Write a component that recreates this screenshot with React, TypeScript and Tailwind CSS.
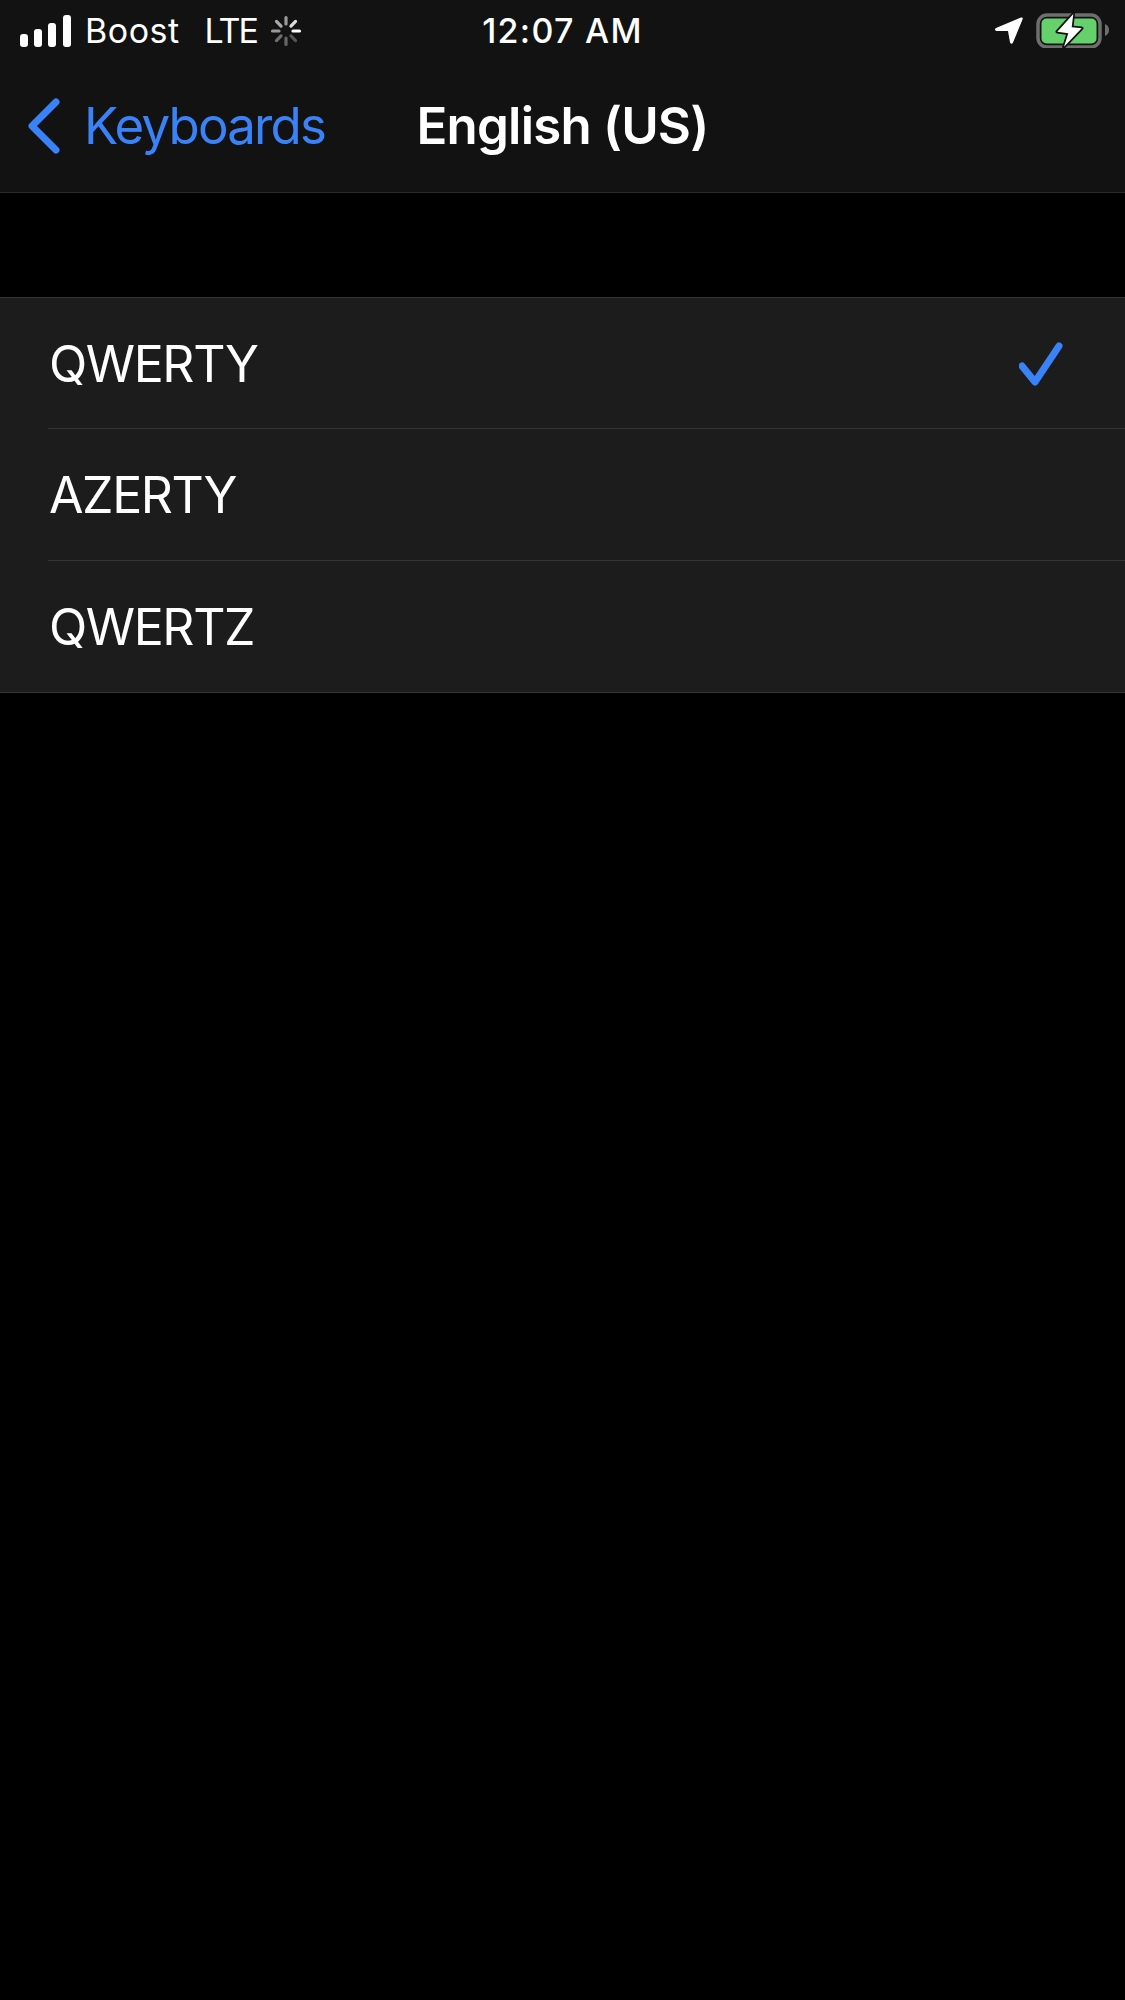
const FONT = "font-['Inter',sans-serif]";

function SignalBars() {
  return (
    <svg width="52" height="33" viewBox="0 0 52 33" className="shrink-0">
      <rect x="0" y="19" width="8" height="13" rx="3" fill="#fff" />
      <rect x="14" y="14" width="8" height="18" rx="3" fill="#fff" />
      <rect x="28" y="8" width="8" height="24" rx="3" fill="#fff" />
      <rect x="43" y="0" width="8" height="32" rx="3" fill="#fff" />
    </svg>
  );
}

function Spinner() {
  const shades = ["#999999", "#dddddd", "#ffffff", "#555555", "#666666", "#6f6f6f", "#999999", "#aaaaaa"];
  return (
    <svg width="32" height="32" viewBox="0 0 32 32" className="shrink-0">
      {shades.map((color, i) => (
        <line
          key={i}
          x1="16"
          y1="2.5"
          x2="16"
          y2="9"
          stroke={color}
          strokeWidth="3.2"
          strokeLinecap="round"
          transform={`rotate(${i * 45} 16 16)`}
        />
      ))}
    </svg>
  );
}

function LocationArrow() {
  return (
    <svg width="32" height="32" viewBox="0 0 32 32" className="shrink-0">
      <path
        d="M3 13 L28 2.5 Q30.5 2 29.5 4.5 L20 27.5 Q18.5 30 17 27.5 L15 16 L3.5 16 Q0.5 15 3 13 Z"
        fill="#fff"
      />
    </svg>
  );
}

function Battery() {
  return (
    <svg width="74" height="36" viewBox="0 0 74 36" className="mb-[2px] shrink-0">
      <rect x="2" y="3" width="62" height="32" rx="9" fill="none" stroke="#6e6e6e" strokeWidth="3.5" />
      <rect x="5.5" y="6.5" width="55" height="25" rx="5" fill="#65d16c" />
      <path d="M69 12 Q73 13.5 73 18 Q73 22.5 69 24 Z" fill="#6e6e6e" />
      <path
        d="M37.3 2 L21.3 19.7 L32.3 21.3 L28 34.7 L45.7 16.3 L35.7 15.3 Z"
        fill="#fff"
        stroke="#121212"
        strokeWidth="3.5"
        strokeLinejoin="round"
        paintOrder="stroke"
      />
    </svg>
  );
}

function StatusBar() {
  return (
    <div className="grid h-[62px] grid-cols-[1fr_auto_1fr] items-center text-white">
      <div className="flex items-center pl-[20px]">
        <SignalBars />
        <span className="ml-[13px] text-[34px] leading-none tracking-[0.5px]">Boost</span>
        <span className="ml-[25px] text-[34px] leading-none tracking-[-2px]">LTE</span>
        <span className="ml-[13px] flex">
          <Spinner />
        </span>
      </div>
      <span className="text-[34px] font-medium leading-none tracking-[1.3px]">12:07 AM</span>
      <div className="flex items-center justify-end gap-[11px] pr-[15px]">
        <LocationArrow />
        <Battery />
      </div>
    </div>
  );
}

function NavBar() {
  return (
    <div className="grid h-[131px] grid-cols-[1fr_auto_1fr] items-center border-b border-[#2a2a2a] pb-[3px]">
      <div className="flex items-center gap-[23px] pl-[27px] text-[#3a82f7]">
        <svg width="34" height="58" viewBox="0 0 34 58" className="shrink-0">
          <path d="M29 5 L5 29 L29 53" fill="none" stroke="#3a82f7" strokeWidth="7" strokeLinecap="round" strokeLinejoin="round" />
        </svg>
        <span className="text-[51px] leading-none tracking-[-1.8px]">Keyboards</span>
      </div>
      <span className="text-[51px] font-semibold leading-none tracking-[-0.8px] text-white">English (US)</span>
      <div />
    </div>
  );
}

function OptionRow({ label, selected, last, height }: { label: string; selected?: boolean; last?: boolean; height: string }) {
  return (
    <div className="pl-[48px]">
      <div className={`flex items-center justify-between pr-[58px] ${height} ${last ? "" : "border-b border-[#343434]"}`}>
        <span className="pl-[1px] pt-[1px] text-[50px] leading-none tracking-[-1.4px] text-white">{label}</span>
        {selected && (
          <svg width="48" height="48" viewBox="0 0 48 48" className="shrink-0">
            <path d="M3 27 L16 43 L40 7" fill="none" stroke="#3a82f7" strokeWidth="7" strokeLinecap="round" strokeLinejoin="round" />
          </svg>
        )}
      </div>
    </div>
  );
}

export default function App() {
  return (
    <div className={`h-[2000px] w-[1125px] overflow-hidden bg-black ${FONT}`}>
      <div className="bg-[#121212]">
        <StatusBar />
        <NavBar />
      </div>
      <div className="mt-[104px] border-y border-[#343434] bg-[#1c1c1c]">
        <OptionRow label="QWERTY" selected height="h-[131px]" />
        <OptionRow label="AZERTY" height="h-[132px]" />
        <OptionRow label="QWERTZ" last height="h-[131px]" />
      </div>
    </div>
  );
}
